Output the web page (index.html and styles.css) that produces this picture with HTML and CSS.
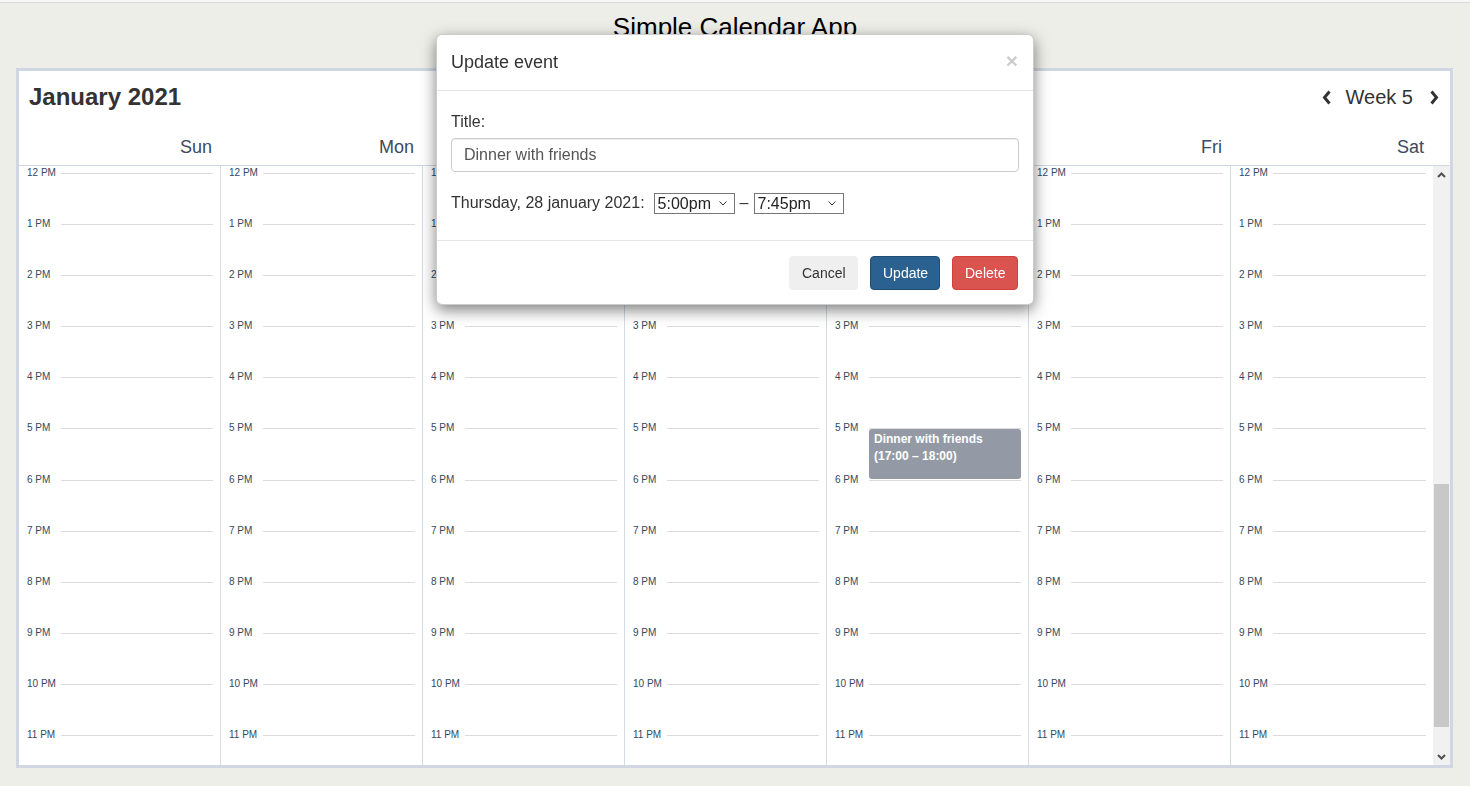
FILE: index.html
```html
<!DOCTYPE html>
<html>
<head>
<meta charset="utf-8">
<title>Simple Calendar App</title>
<link rel="stylesheet" href="styles.css">
</head>
<body>
<div class="topline"></div>
<h1 class="app-title">Simple Calendar App</h1>

<div class="cal">
  <div class="cal-head">
    <div class="title-row">
      <h2 class="month">January 2021</h2>
      <div class="week-nav">
        <svg class="chev" width="10" height="15" viewBox="0 0 10 15"><polyline points="7.5,1.5 2.5,7.5 7.5,13.5" fill="none" stroke="#333" stroke-width="3"/></svg>
        <span class="week">Week 5</span>
        <svg class="chev" width="10" height="15" viewBox="0 0 10 15"><polyline points="2.5,1.5 7.5,7.5 2.5,13.5" fill="none" stroke="#333" stroke-width="3"/></svg>
      </div>
    </div>
    <div class="days">
      <div class="day">Sun</div>
      <div class="day">Mon</div>
      <div class="day">Tue</div>
      <div class="day">Wed</div>
      <div class="day">Thu</div>
      <div class="day">Fri</div>
      <div class="day">Sat</div>
      <div></div>
    </div>
  </div>

  <div class="cal-body">
    <div class="col">
      <div class="h"><span>12 PM</span><i></i></div>
      <div class="h"><span>1 PM</span><i></i></div>
      <div class="h"><span>2 PM</span><i></i></div>
      <div class="h"><span>3 PM</span><i></i></div>
      <div class="h"><span>4 PM</span><i></i></div>
      <div class="h"><span>5 PM</span><i></i></div>
      <div class="h"><span>6 PM</span><i></i></div>
      <div class="h"><span>7 PM</span><i></i></div>
      <div class="h"><span>8 PM</span><i></i></div>
      <div class="h"><span>9 PM</span><i></i></div>
      <div class="h"><span>10 PM</span><i></i></div>
      <div class="h"><span>11 PM</span><i></i></div>
    </div>
    <div class="col">
      <div class="h"><span>12 PM</span><i></i></div>
      <div class="h"><span>1 PM</span><i></i></div>
      <div class="h"><span>2 PM</span><i></i></div>
      <div class="h"><span>3 PM</span><i></i></div>
      <div class="h"><span>4 PM</span><i></i></div>
      <div class="h"><span>5 PM</span><i></i></div>
      <div class="h"><span>6 PM</span><i></i></div>
      <div class="h"><span>7 PM</span><i></i></div>
      <div class="h"><span>8 PM</span><i></i></div>
      <div class="h"><span>9 PM</span><i></i></div>
      <div class="h"><span>10 PM</span><i></i></div>
      <div class="h"><span>11 PM</span><i></i></div>
    </div>
    <div class="col">
      <div class="h"><span>12 PM</span><i></i></div>
      <div class="h"><span>1 PM</span><i></i></div>
      <div class="h"><span>2 PM</span><i></i></div>
      <div class="h"><span>3 PM</span><i></i></div>
      <div class="h"><span>4 PM</span><i></i></div>
      <div class="h"><span>5 PM</span><i></i></div>
      <div class="h"><span>6 PM</span><i></i></div>
      <div class="h"><span>7 PM</span><i></i></div>
      <div class="h"><span>8 PM</span><i></i></div>
      <div class="h"><span>9 PM</span><i></i></div>
      <div class="h"><span>10 PM</span><i></i></div>
      <div class="h"><span>11 PM</span><i></i></div>
    </div>
    <div class="col">
      <div class="h"><span>12 PM</span><i></i></div>
      <div class="h"><span>1 PM</span><i></i></div>
      <div class="h"><span>2 PM</span><i></i></div>
      <div class="h"><span>3 PM</span><i></i></div>
      <div class="h"><span>4 PM</span><i></i></div>
      <div class="h"><span>5 PM</span><i></i></div>
      <div class="h"><span>6 PM</span><i></i></div>
      <div class="h"><span>7 PM</span><i></i></div>
      <div class="h"><span>8 PM</span><i></i></div>
      <div class="h"><span>9 PM</span><i></i></div>
      <div class="h"><span>10 PM</span><i></i></div>
      <div class="h"><span>11 PM</span><i></i></div>
    </div>
    <div class="col">
      <div class="h"><span>12 PM</span><i></i></div>
      <div class="h"><span>1 PM</span><i></i></div>
      <div class="h"><span>2 PM</span><i></i></div>
      <div class="h"><span>3 PM</span><i></i></div>
      <div class="h"><span>4 PM</span><i></i></div>
      <div class="h"><span>5 PM</span><i></i></div>
      <div class="h"><span>6 PM</span><i></i></div>
      <div class="h"><span>7 PM</span><i></i></div>
      <div class="h"><span>8 PM</span><i></i></div>
      <div class="h"><span>9 PM</span><i></i></div>
      <div class="h"><span>10 PM</span><i></i></div>
      <div class="h"><span>11 PM</span><i></i></div>
      <div class="event">Dinner with friends<br>(17:00 – 18:00)</div>
    </div>
    <div class="col">
      <div class="h"><span>12 PM</span><i></i></div>
      <div class="h"><span>1 PM</span><i></i></div>
      <div class="h"><span>2 PM</span><i></i></div>
      <div class="h"><span>3 PM</span><i></i></div>
      <div class="h"><span>4 PM</span><i></i></div>
      <div class="h"><span>5 PM</span><i></i></div>
      <div class="h"><span>6 PM</span><i></i></div>
      <div class="h"><span>7 PM</span><i></i></div>
      <div class="h"><span>8 PM</span><i></i></div>
      <div class="h"><span>9 PM</span><i></i></div>
      <div class="h"><span>10 PM</span><i></i></div>
      <div class="h"><span>11 PM</span><i></i></div>
    </div>
    <div class="col">
      <div class="h"><span>12 PM</span><i></i></div>
      <div class="h"><span>1 PM</span><i></i></div>
      <div class="h"><span>2 PM</span><i></i></div>
      <div class="h"><span>3 PM</span><i></i></div>
      <div class="h"><span>4 PM</span><i></i></div>
      <div class="h"><span>5 PM</span><i></i></div>
      <div class="h"><span>6 PM</span><i></i></div>
      <div class="h"><span>7 PM</span><i></i></div>
      <div class="h"><span>8 PM</span><i></i></div>
      <div class="h"><span>9 PM</span><i></i></div>
      <div class="h"><span>10 PM</span><i></i></div>
      <div class="h"><span>11 PM</span><i></i></div>
    </div>
    <div class="sb">
      <div class="sb-btn"><svg width="9" height="6" viewBox="0 0 9 6"><polyline points="1,5 4.5,1.5 8,5" fill="none" stroke="#505050" stroke-width="2"/></svg></div>
      <div class="sb-thumb"></div>
      <div class="sb-fill"></div>
      <div class="sb-btn"><svg width="9" height="6" viewBox="0 0 9 6"><polyline points="1,1 4.5,4.5 8,1" fill="none" stroke="#505050" stroke-width="2"/></svg></div>
    </div>
  </div>
</div>

<div class="modal">
  <div class="modal-header">
    <span class="close">×</span>
    <h4 class="modal-title">Update event</h4>
  </div>
  <div class="modal-body">
    <label class="lbl">Title:</label>
    <input class="form-control" type="text" value="Dinner with friends">
    <div class="date-row">
      <span>Thursday, 28 january 2021:</span>
      <span class="sel w80"><select><option>5:00pm</option></select><svg width="8" height="5" viewBox="0 0 8 5"><polyline points="0.5,0.5 4,4 7.5,0.5" fill="none" stroke="#333" stroke-width="1"/></svg></span>
      <span class="dash">–</span>
      <span class="sel w90"><select><option>7:45pm</option></select><svg width="8" height="5" viewBox="0 0 8 5"><polyline points="0.5,0.5 4,4 7.5,0.5" fill="none" stroke="#333" stroke-width="1"/></svg></span>
    </div>
  </div>
  <div class="modal-footer">
    <button class="btn btn-default">Cancel</button>
    <button class="btn btn-primary">Update</button>
    <button class="btn btn-danger">Delete</button>
  </div>
</div>
</body>
</html>
```

FILE: styles.css
```css
* { box-sizing: border-box; }
html, body { margin: 0; padding: 0; }
body {
  background: #eeeee9;
  font-family: "Liberation Sans", Arial, sans-serif;
  color: #333;
  height: 786px;
  overflow: hidden;
}
.topline {
  height: 3px;
  background: #f7f7f5;
  border-bottom: 1px solid #dcdcdc;
}
.app-title {
  margin: 9px 0 0;
  text-align: center;
  font-size: 26px;
  font-weight: normal;
  line-height: 30px;
  color: #000;
  height: 30px;
}
.cal {
  margin: 26px 17px 0 16px;
  border: 3px solid #d0d7e2;
  background: #fff;
  width: 1437px;
}
.cal-head {
  padding-top: 12px;
  border-bottom: 1px solid #d0d7e2;
}
.title-row {
  display: flex;
  align-items: center;
  justify-content: space-between;
  height: 28px;
  padding: 0 11px 0 10px;
}
.month {
  margin: 0;
  font-size: 24px;
  font-weight: bold;
  line-height: 28px;
  color: #333;
}
.week-nav {
  display: flex;
  align-items: center;
}
.week {
  font-size: 20px;
  color: #333;
  margin: 0 16px 0 14px;
  line-height: 24px;
}
.chev { display: block; }
.days {
  display: grid;
  grid-template-columns: repeat(7, 1fr) 17px;
  margin-top: 26px;
  padding-bottom: 7px;
}
.day {
  text-align: right;
  font-size: 18px;
  line-height: 21px;
  color: #3b4a60;
  padding-right: 9px;
}
.cal-body {
  display: grid;
  grid-template-columns: repeat(7, 1fr) 17px;
  height: 599px;
  overflow: hidden;
}
.col {
  position: relative;
  border-right: 1px solid #d3dbe6;
  overflow: hidden;
  padding-top: 1px;
}
.col:nth-child(7) { border-right: none; }
.h {
  display: flex;
  align-items: flex-start;
  height: 51.1px;
  padding: 0 7px 0 8px;
}
.h span {
  width: 34px;
  flex: none;
  font-size: 10px;
  line-height: 12px;
  color: #34495e;
}
.h i {
  flex: 1;
  height: 1px;
  margin-top: 6px;
  background: #dcdcdc;
}
.event {
  position: absolute;
  left: 42px;
  right: 7px;
  top: 262.5px;
  height: 50px;
  background: #949aa5;
  border-radius: 3px;
  color: #fff;
  font-size: 12px;
  font-weight: bold;
  line-height: 17.5px;
  padding: 2px 5px;
}
.sb {
  background: #f1f1f1;
  display: flex;
  flex-direction: column;
}
.sb-btn {
  height: 17px;
  display: flex;
  align-items: center;
  justify-content: center;
  flex: none;
}
.sb-thumb {
  margin: 301px 1px 0 1px;
  height: 243px;
  background: #c8c8c8;
  flex: none;
}
.sb-fill { flex: 1; }

/* modal */
.modal {
  position: fixed;
  left: 436px;
  top: 34px;
  width: 598px;
  background: #fff;
  border: 1px solid rgba(0, 0, 0, 0.2);
  border-radius: 6px;
  box-shadow: 0 5px 15px rgba(0, 0, 0, 0.5);
  font-size: 16px;
}
.modal-header {
  padding: 15px 15px 15px 14px;
  border-bottom: 1px solid #e5e5e5;
  height: 56px;
}
.modal-title {
  margin: 0;
  font-size: 18px;
  font-weight: normal;
  line-height: 25px;
  color: #333;
}
.close {
  float: right;
  font-size: 21px;
  font-weight: bold;
  line-height: 1;
  color: #000;
  opacity: 0.2;
  margin-top: 0;
}
.modal-body {
  padding: 15px 15px 26px 14px;
  border-bottom: 1px solid #e5e5e5;
}
.lbl {
  display: block;
  line-height: 22px;
  margin: 5px 0 5px;
  color: #333;
}
.form-control {
  display: block;
  width: 568px;
  height: 34px;
  padding: 6px 12px;
  font-family: "Liberation Sans", Arial, sans-serif;
  font-size: 16px;
  color: #555;
  border: 1px solid #ccc;
  border-radius: 4px;
  box-shadow: inset 0 1px 1px rgba(0, 0, 0, 0.075);
  background: #fff;
  margin: 0;
}
.date-row {
  display: flex;
  align-items: center;
  margin-top: 20px;
  height: 22px;
  color: #333;
}
.sel {
  display: inline-flex;
  align-items: center;
  justify-content: space-between;
  height: 21px;
  border: 1px solid #767676;
  background: #fff;
  padding: 0 7px 0 3px;
  margin-left: 9px;
}
.sel.w80 { width: 81px; }
.sel.w90 { width: 90px; margin-left: 0; }
.sel select {
  appearance: none;
  -webkit-appearance: none;
  border: none;
  background: transparent;
  font-family: "Liberation Sans", Arial, sans-serif;
  font-size: 16px;
  color: #222;
  padding: 0;
  margin: 0;
  outline: none;
  line-height: 19px;
}
.sel svg { flex: none; }
.dash { margin: 0 5px 0 5px; }
.modal-footer {
  display: flex;
  justify-content: flex-end;
  gap: 12px;
  padding: 15px 15px 14px;
}
.btn {
  font-family: "Liberation Sans", Arial, sans-serif;
  font-size: 14px;
  line-height: 20px;
  height: 34px;
  padding: 6px 12px;
  border-radius: 4px;
  border: 1px solid transparent;
  margin: 0;
}
.btn-default { background: #efefef; border-color: #efefef; color: #333; width: 69px; }
.btn-primary { background: #2b6191; border-color: #204d74; color: #fff; width: 70px; }
.btn-danger { background: #d9534f; border-color: #d43f3a; color: #fff; width: 66px; }
```
